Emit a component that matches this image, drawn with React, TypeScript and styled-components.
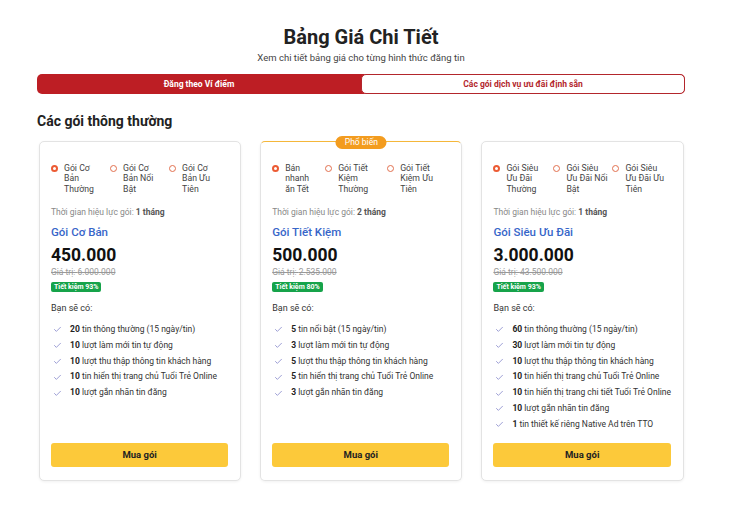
import styled, { createGlobalStyle } from "styled-components";
import { Check } from "lucide-react";

const GlobalStyle = createGlobalStyle`
  body {
    margin: 0;
    background: #ffffff;
    font-family: Roboto, "Noto Sans", Arial, sans-serif;
    color: #222;
  }
`

const Page = styled.div`
  width: 648px;
  margin-left: 37px;
  padding-top: 25px;
  padding-bottom: 28px;
`

const Title = styled.h1`
  margin: 0;
  text-align: center;
  font-size: 20px;
  line-height: 24px;
  font-weight: 700;
  color: #222;
`

const Subtitle = styled.p`
  margin: 3px 0 0 0;
  text-align: center;
  font-size: 9.5px;
  line-height: 12px;
  color: #444;
`

const Tabs = styled.div`
  display: grid;
  grid-template-columns: 1fr 1fr;
  margin-top: 10px;
  height: 20px;
  background: #bd1e24;
  border-radius: 5px;
`

const Tab = styled.div<{ $active?: boolean }>`
  display: flex;
  align-items: center;
  justify-content: center;
  font-size: 8.5px;
  font-weight: 700;
  border-radius: 5px;
  color: ${p => p.$active ? "#fff" : "#b3262c"};
  background: ${p => p.$active ? "transparent" : "#fff"};
  border: ${p => p.$active ? "none" : "1px solid #b3262c"};
  box-sizing: border-box;
`

const SectionTitle = styled.h2`
  margin: 19px 0 0 0;
  font-size: 14px;
  line-height: 17px;
  font-weight: 700;
  color: #222;
`

const Grid = styled.div`
  display: grid;
  grid-template-columns: repeat(3, 1fr);
  gap: 19px;
  margin-top: 11px;
  padding-left: 2px;
  padding-right: 1px;
`

const Card = styled.div<{ $featured?: boolean }>`
  position: relative;
  display: flex;
  flex-direction: column;
  border: 1px solid #e3e3e3;
  border-top: ${p => p.$featured ? "1.5px solid #f5b73a" : "1px solid #e3e3e3"};
  border-radius: 5px;
  box-shadow: 0 1px 3px rgba(0, 0, 0, 0.06);
  padding: 21px 12px 13px 11px;
  background: #fff;
`

const Badge = styled.div`
  position: absolute;
  top: -6px;
  left: 50%;
  transform: translateX(-50%);
  height: 13px;
  padding: 0 9px;
  border-radius: 7px;
  background: #f39c1f;
  color: #fff;
  font-size: 8.5px;
  line-height: 13px;
  white-space: nowrap;
`

const RadioRow = styled.div<{ $cols: string }>`
  display: grid;
  grid-template-columns: ${p => p.$cols};
  height: 31px;
`

const RadioItem = styled.label`
  display: flex;
  align-items: flex-start;
  gap: 6px;
`

const Dot = styled.span<{ $checked?: boolean }>`
  flex: none;
  width: 7px;
  height: 7px;
  margin-top: 2px;
  border-radius: 50%;
  box-sizing: border-box;
  border: ${p => p.$checked ? "2.5px solid #ec5b34" : "1px solid #e2704f"};
  background: #fff;
`

const RadioLabel = styled.span`
  font-size: 8.7px;
  line-height: 10.3px;
  color: #444;
  white-space: pre-line;
`

const Duration = styled.div`
  margin-top: 13px;
  font-size: 8.5px;
  line-height: 11px;
  color: #888;
  b { color: #555; font-weight: 700; }
`

const PlanName = styled.div`
  margin-top: 7px;
  font-size: 11.5px;
  line-height: 14px;
  color: #3766c9;
  font-weight: 500;
`

const Price = styled.div`
  margin-top: 6px;
  font-size: 17.5px;
  line-height: 20px;
  font-weight: 700;
  color: #111;
`

const OldPrice = styled.div`
  margin-top: 2px;
  font-size: 8.5px;
  line-height: 11px;
  color: #999;
  text-decoration: line-through;
`

const Save = styled.span`
  align-self: flex-start;
  margin-top: 4px;
  height: 10px;
  padding: 0 3px;
  border-radius: 2px;
  background: #16a34a;
  color: #fff;
  font-size: 7px;
  line-height: 10px;
  font-weight: 700;
`

const IncludesLabel = styled.div`
  margin-top: 10px;
  font-size: 9px;
  line-height: 12px;
  color: #333;
`

const Features = styled.ul`
  list-style: none;
  margin: 8px 0 10px 0;
  padding: 0;
`

const Feature = styled.li`
  display: flex;
  align-items: center;
  gap: 8px;
  padding-left: 2px;
  font-size: 8.5px;
  line-height: 15.8px;
  color: #333;
  white-space: nowrap;
  b { font-weight: 700; color: #222; }
  svg { flex: none; color: #5d5fb8; }
`

const BuyButton = styled.button`
  margin-top: auto;
  height: 24px;
  border: none;
  border-radius: 3px;
  background: #fcc93a;
  color: #222;
  font-family: inherit;
  font-size: 9.5px;
  font-weight: 700;
  cursor: pointer;
`

type Plan = {
  options: string[];
  cols: string;
  months: number;
  name: string;
  price: string;
  oldPrice: string;
  save: string;
  features: [string, string][];
  featured?: boolean;
};

const plans: Plan[] = [
  {
    options: ["Gói Cơ\nBản\nThường", "Gói Cơ\nBản Nổi\nBật", "Gói Cơ\nBản Ưu\nTiên"],
    cols: "59px 59px 1fr",
    months: 1,
    name: "Gói Cơ Bản",
    price: "450.000",
    oldPrice: "6.000.000",
    save: "93%",
    features: [
      ["20", "tin thông thường (15 ngày/tin)"],
      ["10", "lượt làm mới tin tự động"],
      ["10", "lượt thu thập thông tin khách hàng"],
      ["10", "tin hiển thị trang chủ Tuổi Trẻ Online"],
      ["10", "lượt gắn nhãn tin đăng"],
    ],
  },
  {
    options: ["Bán\nnhanh\năn Tết", "Gói Tiết\nKiệm\nThường", "Gói Tiết\nKiệm Ưu\nTiên"],
    cols: "53px 62px 1fr",
    months: 2,
    name: "Gói Tiết Kiệm",
    price: "500.000",
    oldPrice: "2.535.000",
    save: "80%",
    featured: true,
    features: [
      ["5", "tin nổi bật (15 ngày/tin)"],
      ["3", "lượt làm mới tin tự động"],
      ["5", "lượt thu thập thông tin khách hàng"],
      ["5", "tin hiển thị trang chủ Tuổi Trẻ Online"],
      ["3", "lượt gắn nhãn tin đăng"],
    ],
  },
  {
    options: ["Gói Siêu\nƯu Đãi\nThường", "Gói Siêu\nƯu Đãi Nổi\nBật", "Gói Siêu\nƯu Đãi Ưu\nTiên"],
    cols: "60px 59px 1fr",
    months: 1,
    name: "Gói Siêu Ưu Đãi",
    price: "3.000.000",
    oldPrice: "43.500.000",
    save: "93%",
    features: [
      ["60", "tin thông thường (15 ngày/tin)"],
      ["30", "lượt làm mới tin tự động"],
      ["10", "lượt thu thập thông tin khách hàng"],
      ["10", "tin hiển thị trang chủ Tuổi Trẻ Online"],
      ["10", "tin hiển thị trang chi tiết Tuổi Trẻ Online"],
      ["10", "lượt gắn nhãn tin đăng"],
      ["1", "tin thiết kế riêng Native Ad trên TTO"],
    ],
  },
];

const PlanCard = ({ plan }: { plan: Plan }) => (
  <Card $featured={plan.featured}>
    {plan.featured && <Badge>Phổ biến</Badge>}
    <RadioRow $cols={plan.cols}>
      {plan.options.map((opt, idx) => (
        <RadioItem key={opt}>
          <Dot $checked={idx === 0} />
          <RadioLabel>{opt}</RadioLabel>
        </RadioItem>
      ))}
    </RadioRow>
    <Duration>Thời gian hiệu lực gói: <b>{plan.months} tháng</b></Duration>
    <PlanName>{plan.name}</PlanName>
    <Price>{plan.price}</Price>
    <OldPrice>Giá trị: {plan.oldPrice}</OldPrice>
    <Save>Tiết kiệm {plan.save}</Save>
    <IncludesLabel>Bạn sẽ có:</IncludesLabel>
    <Features>
      {plan.features.map(([num, text]) => (
        <Feature key={text}>
          <Check size={9} strokeWidth={1.6} />
          <span><b>{num}</b> {text}</span>
        </Feature>
      ))}
    </Features>
    <BuyButton>Mua gói</BuyButton>
  </Card>
)

const App = () => {
  return (
    <>
      <GlobalStyle />
      <Page>
        <Title>Bảng Giá Chi Tiết</Title>
        <Subtitle>Xem chi tiết bảng giá cho từng hình thức đăng tin</Subtitle>
        <Tabs>
          <Tab $active>Đăng theo Ví điểm</Tab>
          <Tab>Các gói dịch vụ ưu đãi định sẵn</Tab>
        </Tabs>
        <SectionTitle>Các gói thông thường</SectionTitle>
        <Grid>
          {plans.map(p => <PlanCard key={p.name} plan={p} />)}
        </Grid>
      </Page>
    </>
  )
}

export default App;
